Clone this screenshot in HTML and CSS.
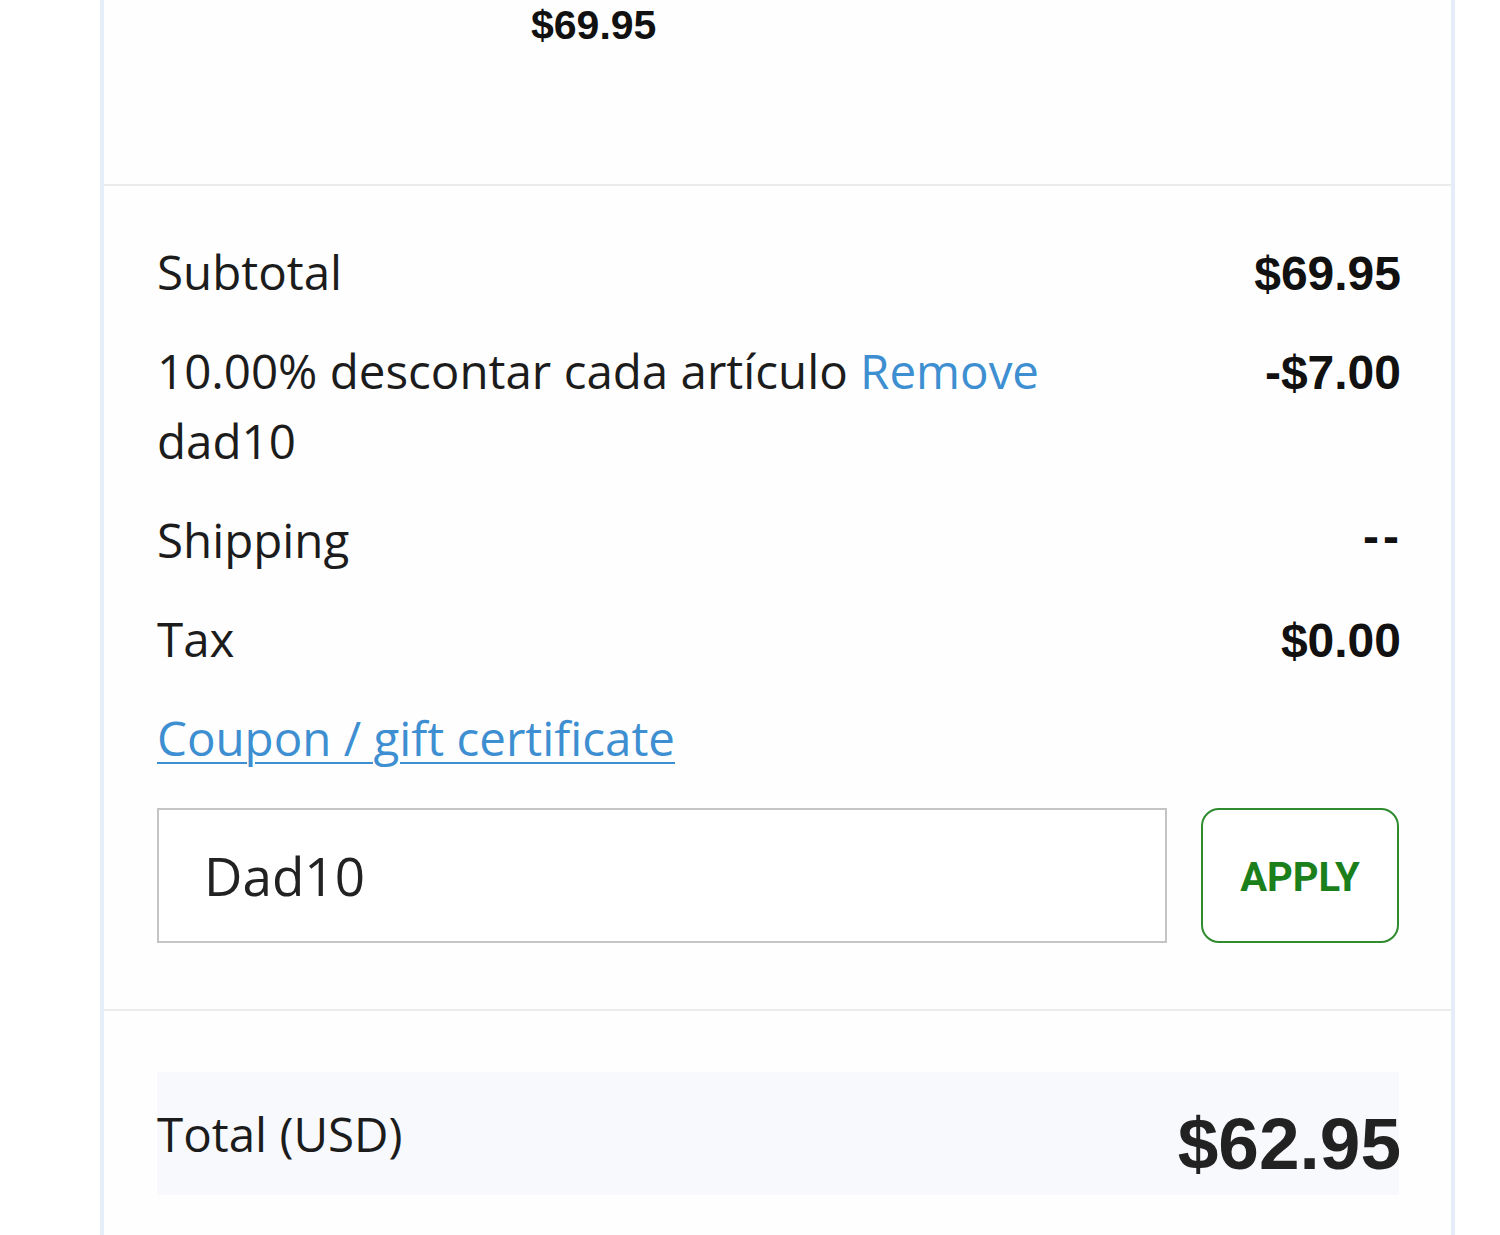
FILE: index.html
```html
<!DOCTYPE html>
<html lang="es">
<head>
<meta charset="utf-8">
<title>Order summary</title>
<link rel="stylesheet" href="styles.css">
</head>
<body>
<div class="page">
  <section class="summary">
    <div class="product">
      <div class="product-info">
        <div class="product-price">$69.95</div>
      </div>
    </div>
    <div class="totals">
      <div class="row">
        <span class="label">Subtotal</span>
        <span class="value">$69.95</span>
      </div>
      <div class="row">
        <span class="label">10.00% descontar cada artículo <a class="link" href="#">Remove</a><br>dad10</span>
        <span class="value">-$7.00</span>
      </div>
      <div class="row">
        <span class="label">Shipping</span>
        <span class="value dash">--</span>
      </div>
      <div class="row">
        <span class="label">Tax</span>
        <span class="value">$0.00</span>
      </div>
      <div class="row">
        <a class="label coupon-link" href="#">Coupon / gift certificate</a>
      </div>
      <form class="coupon-form">
        <input class="coupon-input" type="text" value="Dad10">
        <button class="apply-btn" type="button">APPLY</button>
      </form>
    </div>
    <div class="grand">
      <div class="grand-row">
        <span class="label">Total (USD)</span>
        <span class="grand-value">$62.95</span>
      </div>
    </div>
  </section>
</div>
</body>
</html>
```

FILE: styles.css
```css
html, body {
  margin: 0;
  padding: 0;
  background: #ffffff;
}

body {
  font-family: "Open Sans", "Noto Sans", sans-serif;
  color: #1c1c1c;
}

.page {
  padding-left: 100px;
  width: 1355px;
}

.summary {
  border-left: 4px solid #e4edf8;
  border-right: 4px solid #e4edf8;
  background: #fefefe;
  height: 1235px;
  box-sizing: border-box;
}

.product {
  height: 184px;
  border-bottom: 2px solid #ebebeb;
  padding-left: 427px;
}

.product-price {
  font-family: "Liberation Sans", Arial, sans-serif;
  font-weight: 700;
  font-size: 41px;
  line-height: 50px;
  color: #111;
}

.totals {
  padding: 51px 52px 66px 53px;
  display: flex;
  flex-direction: column;
  gap: 29px;
  border-bottom: 2px solid #ebebeb;
}

.row {
  display: flex;
  justify-content: space-between;
  align-items: baseline;
}

.label {
  font-size: 47.5px;
  line-height: 70px;
  color: #1c1c1c;
}

.value {
  font-family: "Liberation Sans", Arial, sans-serif;
  font-weight: 700;
  font-size: 48px;
  color: #111;
  margin-right: -2px;
}

.dash {
  letter-spacing: 4px;
  margin-right: -4px;
  position: relative;
  top: -5px;
}

.link {
  color: #3d8fd1;
  text-decoration: none;
}

.coupon-link {
  color: #3d8fd1;
  text-decoration: underline;
  text-decoration-thickness: 2px;
  text-underline-offset: 6px;
}

.coupon-form {
  display: flex;
  gap: 34px;
  margin-top: 6px;
}

.coupon-input {
  flex: 1;
  height: 135px;
  box-sizing: border-box;
  border: 2px solid #c4c4c4;
  border-radius: 0;
  padding: 0 0 0 45px;
  font-family: "Open Sans", "Noto Sans", sans-serif;
  font-size: 53px;
  color: #222;
  background: #fff;
  outline: none;
}

.apply-btn {
  width: 198px;
  height: 135px;
  box-sizing: border-box;
  border: 2px solid #2e8b2e;
  border-radius: 18px;
  background: #fff;
  color: #1b7f1b;
  font-family: Roboto, "Liberation Sans", sans-serif;
  font-weight: 700;
  font-size: 40px;
  padding: 4px 0 0;
}

.grand {
  padding: 61px 52px 0 53px;
}

.grand-row {
  display: flex;
  justify-content: space-between;
  align-items: center;
  height: 123px;
  background: #f8f9fd;
}

.grand-value {
  font-family: "Liberation Sans", Arial, sans-serif;
  font-weight: 700;
  font-size: 73px;
  line-height: 74px;
  color: #222;
  margin-top: 21px;
  margin-right: -2px;
}
```
